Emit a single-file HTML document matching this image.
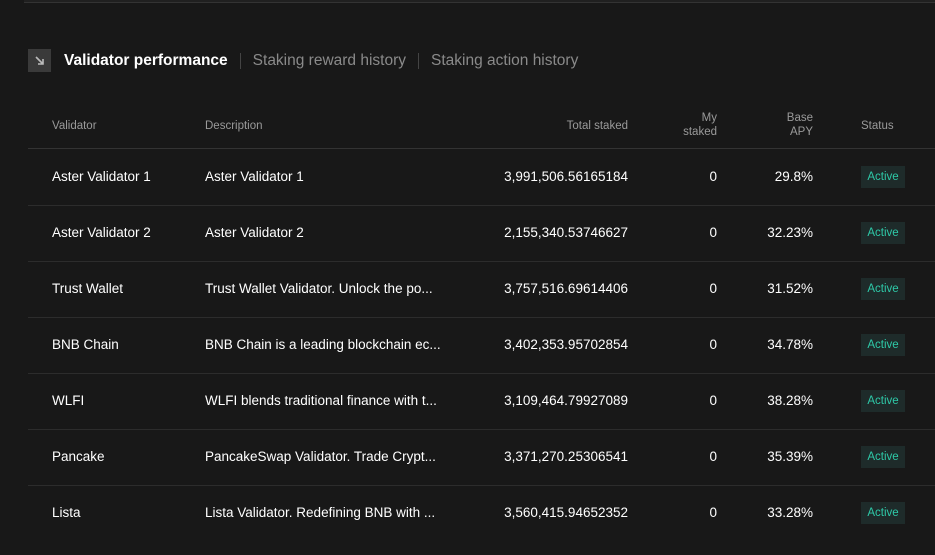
<!DOCTYPE html>
<html><head><meta charset="utf-8"><style>
body{margin:0;width:935px;height:555px;background:#181818;font-family:"Liberation Sans",sans-serif;color:#fff;overflow:hidden;position:relative}
.top{position:absolute;left:24px;right:0;top:0;height:2px;background:#202020;border-bottom:1px solid #333}
.tabs{position:absolute;top:49px;left:28px;display:flex;align-items:center;height:23px}
.ic{width:23px;height:23px;background:#3a3a3a;display:flex;align-items:center;justify-content:center;margin-right:13px}
.t{font-size:15.5px;color:#8a8a8a}
.t.a{color:#fff;font-weight:bold}
.sep{width:1px;height:16px;background:#444;margin:0 12px}
.hd{position:absolute;top:108px;left:28px;right:0;height:40px;border-bottom:1px solid #333;font-size:11.5px;color:#9a9a9a}
.c{position:absolute}
.row{position:absolute;left:28px;right:0;height:56px;border-bottom:1px solid #2c2c2c;font-size:13.5px;color:#fff}
.row .c{top:20px}
.badge{position:absolute;left:833px;top:17px;width:44px;height:22px;background:#1e2b2a;color:#2ec9a8;font-size:11.5px;line-height:22px;text-align:center}
.r{text-align:right}
</style></head><body>
<div class="top"></div>
<div class="tabs">
<div class="ic"><svg width="11" height="11" viewBox="0 0 11 11"><path d="M2 2L9 9M9 4V9H4" stroke="#bbb" stroke-width="1.6" fill="none"/></svg></div>
<span class="t a">Validator performance</span><span class="sep"></span><span class="t">Staking reward history</span><span class="sep"></span><span class="t">Staking action history</span>
</div>
<div class="hd">
<div class="c" style="left:24px;top:12px">Validator</div>
<div class="c" style="left:177px;top:12px">Description</div>
<div class="c r" style="right:307px;top:12px">Total staked</div>
<div class="c r" style="right:218px;top:3px;line-height:14px">My<br>staked</div>
<div class="c r" style="right:122px;top:3px;line-height:14px">Base<br>APY</div>
<div class="c" style="left:833px;top:12px">Status</div>
</div>
<div class="row" style="top:149px"><div class="c" style="left:24px">Aster Validator 1</div><div class="c" style="left:177px">Aster Validator 1</div><div class="c r" style="right:307px">3,991,506.56165184</div><div class="c r" style="right:218px">0</div><div class="c r" style="right:122px">29.8%</div><div class="badge">Active</div></div>
<div class="row" style="top:205px"><div class="c" style="left:24px">Aster Validator 2</div><div class="c" style="left:177px">Aster Validator 2</div><div class="c r" style="right:307px">2,155,340.53746627</div><div class="c r" style="right:218px">0</div><div class="c r" style="right:122px">32.23%</div><div class="badge">Active</div></div>
<div class="row" style="top:261px"><div class="c" style="left:24px">Trust Wallet</div><div class="c" style="left:177px">Trust Wallet Validator. Unlock the po...</div><div class="c r" style="right:307px">3,757,516.69614406</div><div class="c r" style="right:218px">0</div><div class="c r" style="right:122px">31.52%</div><div class="badge">Active</div></div>
<div class="row" style="top:317px"><div class="c" style="left:24px">BNB Chain</div><div class="c" style="left:177px">BNB Chain is a leading blockchain ec...</div><div class="c r" style="right:307px">3,402,353.95702854</div><div class="c r" style="right:218px">0</div><div class="c r" style="right:122px">34.78%</div><div class="badge">Active</div></div>
<div class="row" style="top:373px"><div class="c" style="left:24px">WLFI</div><div class="c" style="left:177px">WLFI blends traditional finance with t...</div><div class="c r" style="right:307px">3,109,464.79927089</div><div class="c r" style="right:218px">0</div><div class="c r" style="right:122px">38.28%</div><div class="badge">Active</div></div>
<div class="row" style="top:429px"><div class="c" style="left:24px">Pancake</div><div class="c" style="left:177px">PancakeSwap Validator. Trade Crypt...</div><div class="c r" style="right:307px">3,371,270.25306541</div><div class="c r" style="right:218px">0</div><div class="c r" style="right:122px">35.39%</div><div class="badge">Active</div></div>
<div class="row" style="top:485px;border-bottom:none"><div class="c" style="left:24px">Lista</div><div class="c" style="left:177px">Lista Validator. Redefining BNB with ...</div><div class="c r" style="right:307px">3,560,415.94652352</div><div class="c r" style="right:218px">0</div><div class="c r" style="right:122px">33.28%</div><div class="badge">Active</div></div>
</body></html>
